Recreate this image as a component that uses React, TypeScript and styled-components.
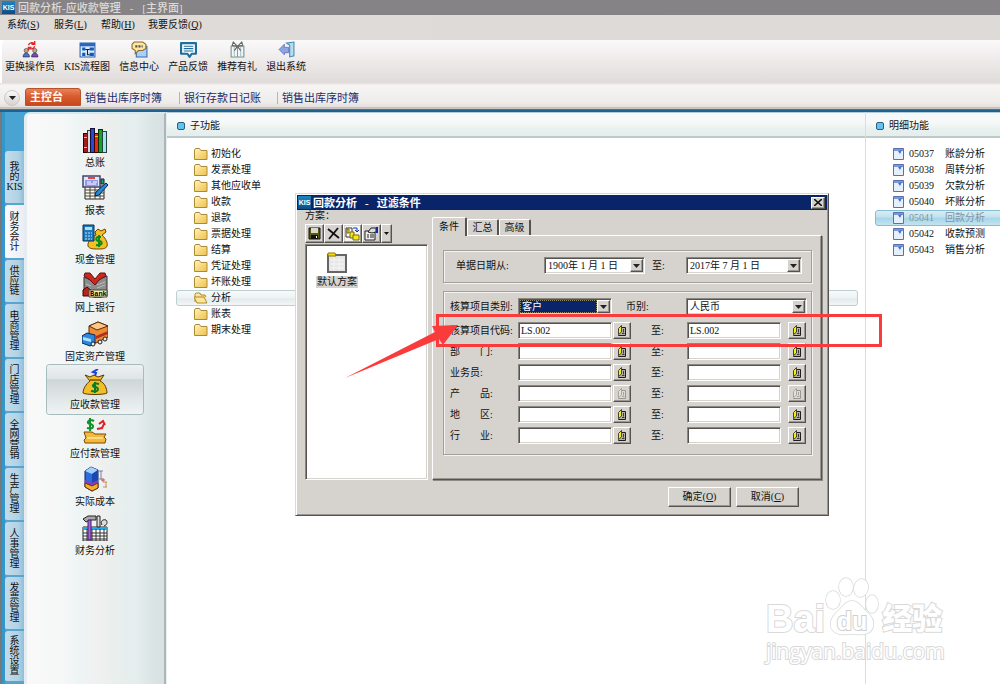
import React from "react";
import styled, { createGlobalStyle, css } from "styled-components";

const Global = createGlobalStyle`
  * { box-sizing: border-box; }
  html, body { margin: 0; padding: 0; }
  body {
    background: #fff;
    color: #111;
    font-family: "Liberation Serif", "Noto Sans CJK SC", sans-serif;
    font-size: 10px;
    line-height: 12px;
    overflow: hidden;
  }
  button, input, select { font: inherit; color: inherit; margin: 0; padding: 0; border-radius: 0; }
  ul { list-style: none; margin: 0; padding: 0; }
  a { color: inherit; text-decoration: none; }
`;

const Page = styled.div`
  position: relative;
  min-height: 100vh;
  display: flex;
  flex-direction: column;
  overflow: hidden;
`;

/* ---------- window chrome ---------- */

const WindowTitle = styled.header`
  display: flex;
  align-items: center;
  gap: 9px;
  height: 15px;
  padding-left: 2px;
  background: #858385;
  color: #dedad6;
  font-size: 11px;
  font-weight: 500;
`;

const KisMark = styled.span`
  display: flex;
  align-items: center;
  justify-content: center;
  width: 13px;
  height: 13px;
  margin-right: -6px;
  background: linear-gradient(#1f86c0, #0a4c86);
  color: #fff;
  font-family: "Liberation Sans", sans-serif;
  font-size: 7px;
  font-weight: 700;
  line-height: 8px;
`;

const MenuBar = styled.nav`
  display: flex;
  height: 25px;
  padding: 4px 0 0 7px;
  background: linear-gradient(90deg, #dfdbd7, #dedad8);
`;

const MenuItem = styled.button`
  min-width: 47px;
  height: 12px;
  border: 0;
  background: none;
  text-align: left;
  white-space: nowrap;
`;

const ToolBar = styled.div`
  display: flex;
  align-items: flex-start;
  gap: 9px;
  height: 43px;
  margin-left: 2px;
  padding: 1px 0 0 3px;
  border-top-left-radius: 4px;
  background: linear-gradient(#faf9fa, #f1eeee 35%, #dfdbd9);
`;

const Tool = styled.button`
  display: flex;
  flex-direction: column;
  align-items: center;
  gap: 3px;
  border: 0;
  background: none;
  white-space: nowrap;
`;

const TabStrip = styled.nav`
  display: flex;
  align-items: flex-end;
  height: 24px;
  padding: 0 0 1px 4px;
  background: linear-gradient(#e3dfdd, #f7f5f4 10%, #efecea 80%, #e4dfdc);
  color: #1c2c6c;
  font-size: 11px;
`;

const RoundButton = styled.button`
  display: flex;
  align-items: center;
  justify-content: center;
  width: 16px;
  height: 16px;
  margin-right: 5px;
  border: 1px solid #cdc9c7;
  border-radius: 8px;
  background: linear-gradient(#fafafa, #d6d2d0);
`;

const PageTab = styled.a<{ $on?: boolean }>`
  display: flex;
  align-items: center;
  height: 18px;
  width: 98px;
  padding-left: 4px;
  white-space: nowrap;
  & + & { border-left: 1px solid #b9b4b2; height: 12px; margin-bottom: 2px; }
  ${(p) =>
    p.$on &&
    css`
      width: 56px;
      border: 1px solid #b4532c;
      border-radius: 3px 3px 0 0;
      background: linear-gradient(#e88458, #d95c30 45%, #c9481f);
      color: #fff;
      font-weight: 700;
    `}
  &&:nth-of-type(2) { border-left: 0; }
`;

const Rule = styled.div`
  height: 5px;
  background: linear-gradient(#c9c2bf 0 2px, #6b6a70 2px 3px, #1f628c 3px 5px);
`;

/* ---------- body ---------- */

const Body = styled.div`
  flex: 1;
  display: flex;
  align-items: stretch;
  background: linear-gradient(90deg, #77787a 0 2px, #3397cb 2px 5px, #49a3d3 5px 30px, #fff 30px);
`;

const SideTabs = styled.nav`
  flex: none;
  width: 24px;
  padding: 39px 0 0 5px;
`;

const SideTab = styled.button<{ $on?: boolean; $short?: boolean }>`
  display: flex;
  align-items: center;
  justify-content: center;
  width: 19px;
  height: ${(p) => (p.$short ? 44 : 54)}px;
  border: 0;
  border-bottom: 2px solid #58a5cf;
  border-radius: 3px 0 0 3px;
  background: ${(p) =>
    p.$on ? "linear-gradient(90deg, #fbfcff, #ececf6)" : "linear-gradient(90deg, #c3dceb, #b2d2e4 70%, #8ebfd9)"};
  line-height: 10px;
  text-align: center;
  &:nth-child(even) { height: 55px; }
  &:last-child { height: 52px; }
`;

const SideLabel = styled.span`
  display: block;
  width: 16px;
  white-space: pre-line;
`;

const Modules = styled.nav`
  flex: none;
  width: 142px;
  padding: 9px 21px 0 20px;
  border-top: 2px solid #d5e9f0;
  border-left: 3px solid #e5edf0;
  border-right: 2px solid #aab6b8;
  border-top-left-radius: 6px;
  background: linear-gradient(90deg, #f9f9f9, #f6f7f7 26%, #edf5f4 38%, #f0f0f0 52%, #e8efed 66%, #e4eeed 80%, #dbe4e4 92%, #d8e0e1);
`;

const Module = styled.a<{ $on?: boolean }>`
  display: flex;
  flex-direction: column;
  align-items: center;
  gap: 4px;
  height: 48px;
  padding-top: 4px;
  white-space: nowrap;
  &:nth-child(even) { height: 49px; }
  ${(p) =>
    p.$on &&
    css`
      border-radius: 3px;
      background: linear-gradient(#eef1f1, #dfe4e5 28%, #cfd6d8 30%, #e2e7e8 70%, #eff3f3);
      box-shadow: 0 0 0 1px #a9bcbc;
    `}
`;

const Pane = styled.section<{ $side?: boolean }>`
  flex: ${(p) => (p.$side ? "0 0 135px" : "1 1 0")};
  min-width: 0;
  border-left: ${(p) => (p.$side ? "1px solid #dcdcdc" : "1px solid #e6eded")};
  background: #fff;
`;

const PaneHead = styled.h2`
  display: flex;
  align-items: center;
  gap: 5px;
  height: 26px;
  margin: 0;
  padding: 2px 0 0 10px;
  border-top: 1px solid #b4cbd8;
  border-bottom: 2px solid #bccaca;
  background: linear-gradient(#f4f8f9, #f7f9f9 40%, #e8f1ef 70%, #e5eeec);
  font-size: 10px;
  font-weight: 400;
`;

const PaneDot = styled.span`
  width: 8px;
  height: 8px;
  border: 1px solid #2a5f80;
  border-radius: 2px;
  background: #63c3f0;
`;

const List = styled.ul`
  padding: 8px 7px 0 9px;
`;

const ListRow = styled.li<{ $on?: boolean; $blue?: boolean }>`
  display: flex;
  height: 16px;
  border: 1px solid transparent;
  border-radius: 3px;
  ${(p) =>
    p.$on &&
    css`
      border-color: ${p.$blue ? "#86bdd3" : "#bccfd1"};
      background: ${p.$blue
        ? "linear-gradient(#d9edf5, #c0e1ef 45%, #a5d5e9 50%, #c3e4f0)"
        : "linear-gradient(#f8fafa, #eef2f2 50%, #e4ebeb 55%, #f1f5f5)"};
    `}
  ${(p) => p.$blue && css`margin-right: -10px;`}
`;

const RowLink = styled.a<{ $dim?: boolean }>`
  display: flex;
  align-items: center;
  gap: 3px;
  padding-left: 17px;
  white-space: nowrap;
  color: ${(p) => (p.$dim ? "#8595a0" : "#111")};
`;

const Code = styled.span`
  width: 33px;
  margin-left: 1px;
`;

/* ---------- dialog ---------- */

const face = "#d6d3ce";

const raised = css`
  border: 1px solid;
  border-color: #fff #55534f #55534f #fff;
  box-shadow: inset -1px -1px #9a9792;
`;

const sunken = css`
  border: 1px solid;
  border-color: #8a8783 #fff #fff #8a8783;
  box-shadow: inset 1px 1px #55534f, inset -1px -1px ${face};
`;

const Dialog = styled.div`
  position: absolute;
  left: 295px;
  top: 193px;
  width: 534px;
  padding: 1px;
  background: ${face};
  border: 1px solid;
  border-color: #dddad6 #55534f #55534f #dddad6;
  box-shadow: inset 1px 1px #fff, inset -1px -1px #9a9792;
`;

const DialogTitle = styled.header`
  display: flex;
  align-items: center;
  gap: 8px;
  height: 15px;
  padding: 0 2px 0 1px;
  background: #0a246a;
  color: #fff;
  font-size: 11px;
  font-weight: 700;
`;

const CloseButton = styled.button`
  ${raised}
  display: flex;
  align-items: center;
  justify-content: center;
  width: 14px;
  height: 12px;
  margin-left: auto;
  background: ${face};
`;

const DialogMain = styled.div`
  display: grid;
  grid-template-columns: 123px 1fr;
  column-gap: 4px;
  padding: 0 5px 0 8px;
`;

const Schemes = styled.section`
  display: flex;
  flex-direction: column;
`;

const SchemeTools = styled.div`
  display: flex;
  height: 19px;
  margin: 2px 0 1px;
`;

const SchemeTool = styled.button<{ $thin?: boolean }>`
  ${raised}
  display: flex;
  align-items: center;
  justify-content: center;
  width: ${(p) => (p.$thin ? 11 : 19)}px;
  height: 19px;
  background: ${face};
`;

const SchemeList = styled.div`
  ${sunken}
  flex: 1;
  padding: 7px 0 0 10px;
  background: #fff;
`;

const Scheme = styled.button`
  display: flex;
  flex-direction: column;
  align-items: center;
  gap: 3px;
  border: 0;
  background: none;
  span { padding: 0 1px; background: ${face}; }
`;

const Settings = styled.section`
  padding-top: 7px;
`;

const TabList = styled.div`
  display: flex;
  align-items: flex-end;
  height: 18px;
`;

const Tab = styled.button<{ $on?: boolean }>`
  height: ${(p) => (p.$on ? 19 : 16)}px;
  width: ${(p) => (p.$on ? 35 : 32)}px;
  margin-bottom: ${(p) => (p.$on ? -1 : 0)}px;
  border: 1px solid #fff;
  border-right: 2px solid #55534f;
  border-bottom: 0;
  border-radius: 2px 2px 0 0;
  background: ${face};
  position: relative;
`;

const TabPanel = styled.div`
  height: 245px;
  padding: 14px 9px 0 10px;
  border: 1px solid;
  border-color: #fff #55534f #55534f #fff;
  box-shadow: inset -1px -1px #9a9792, 1px 1px #8d8a86;
`;

const Group = styled.div<{ $tall?: boolean }>`
  height: ${(p) => (p.$tall ? 164 : 33)}px;
  margin-bottom: 8px;
  padding: ${(p) => (p.$tall ? "6px 4px 0 6px" : "6px 8px 0 12px")};
  border: 1px solid #a29f9b;
  box-shadow: inset 1px 1px #f4f3f1, 1px 1px #f4f3f1;
`;

const Line = styled.div`
  display: grid;
  align-items: center;
  height: 17px;
  white-space: nowrap;
`;

const DateLine = styled(Line)`
  grid-template-columns: 88px 101px 7px 34px 116px;
`;

const KindLine = styled(Line)`
  grid-template-columns: 68px 94px 14px 60px 121px;
  margin-bottom: 5px;
`;

const RangeLine = styled(Line)`
  grid-template-columns: 68px 94px 1px 19px 19px 36px 94px 7px 19px;
  height: 21px;
`;

const Field = styled.input`
  ${sunken}
  width: 100%;
  height: 17px;
  padding: 0 2px;
  background: #fff;
  outline: 0;
`;

const Combo = styled.span`
  ${sunken}
  display: flex;
  height: 17px;
  padding: 1px;
  background: #fff;
`;

const Choice = styled.select<{ $on?: boolean }>`
  appearance: none;
  flex: 1;
  min-width: 0;
  border: 0;
  padding: 0 2px;
  outline: ${(p) => (p.$on ? "1px dotted #8f8a6a" : "0")};
  outline-offset: -1px;
  background: ${(p) => (p.$on ? "#0a246a" : "#fff")};
  color: ${(p) => (p.$on ? "#fff" : "#111")};
`;

const Arrow = styled.span`
  ${raised}
  display: flex;
  align-items: center;
  justify-content: center;
  width: 13px;
  background: ${face};
`;

const PickButton = styled.button`
  ${raised}
  display: flex;
  align-items: center;
  justify-content: center;
  width: 18px;
  height: 17px;
  background: ${face};
`;

const DialogFooter = styled.footer`
  display: flex;
  justify-content: flex-end;
  gap: 5px;
  padding: 7px 28px 7px 0;
`;

const PushButton = styled.button`
  ${raised}
  width: 63px;
  height: 20px;
  background: ${face};
`;

const HighlightBox = styled.div`
  position: absolute;
  left: 140px;
  top: 120px;
  width: 446px;
  height: 33px;
  border: 3px solid #f93b3b;
`;

const HighlightArrow = styled.svg`
  position: absolute;
  left: 46px;
  top: 125px;
`;

/* ---------- watermark ---------- */

const Watermark = styled.div`
  position: absolute;
  right: 50px;
  bottom: 20px;
  width: 184px;
  color: #fff;
  -webkit-text-stroke: 2px #d9d9d9;
  paint-order: stroke fill;
  font-family: "Liberation Sans", "Noto Sans CJK SC", sans-serif;
  font-weight: 700;
`;

const Brand = styled.div`
  display: flex;
  align-items: flex-end;
  height: 62px;
  font-size: 38px;
  line-height: 38px;
  b { font-size: 30px; }
  svg { margin: 0 4px 2px 3px; }
`;

const Address = styled.div`
  font-family: "Open Sans", sans-serif;
  font-size: 21px;
  font-weight: 400;
  line-height: 26px;
`;

/* ---------- drawings ---------- */

const ic = { width: 26, height: 26, viewBox: "0 0 26 26", "aria-hidden": true } as const;

const moduleIcons: Record<string, React.ReactNode> = {
  总账: (
    <svg {...ic} shapeRendering="crispEdges">
      <path d="M1 6h4v19H1z" fill="#a01c20" stroke="#300" />
      <path d="M5 3h3v22H5z" fill="#d8d8d8" stroke="#333" />
      <path d="M8 1h4v24H8z" fill="#2448e0" stroke="#113" />
      <path d="M12 6h4v19h-4z" fill="#e82818" stroke="#400" />
      <path d="M16 2h4v23h-4z" fill="#18a028" stroke="#030" />
      <path d="M20 4h4v21h-4z" fill="#a8e4f0" stroke="#244" />
      <path d="M13 9h3M2 10h3M2 20h3" stroke="#fc0" />
    </svg>
  ),
  报表: (
    <svg {...ic}>
      <path d="M3 11h19v13H3z" fill="#fffbe8" stroke="#222" />
      <path d="M3 15h19M3 18h19M3 21h19M8 11v13M13 11v13M18 11v13" stroke="#444" />
      <path d="M1 1h17v11H1z" fill="#dfe4ff" stroke="#446" strokeWidth="1.500" />
      <path d="M6 3h7" stroke="#e04848" strokeWidth="2" />
      <path d="M3 5h13v6H3z" fill="#9098ea" />
      <path d="M5 7h4M11 7h4M5 9h9" stroke="#fff" />
      <path d="M19 4h3v5h-3z" fill="#2a9a70" stroke="#123" />
      <path d="M24 8l2 2-9 10-4 1 1-4z" fill="#1c8ce0" stroke="#124" />
    </svg>
  ),
  现金管理: (
    <svg {...ic}>
      <path d="M13 8l3-3 3 2 4-2 1 3-4 3c4 4 6 8 5 11-1 3-5 3-9 3s-9 0-10-3c-1-4 4-9 8-11z" fill="#f4c020" stroke="#6a4300" />
      <path d="M19 13c-6-1-6 4-2 4s4 5-3 4M17 11v12" stroke="#0a8a20" strokeWidth="2" fill="none" />
      <path d="M1 1h11v16H1z" fill="#1c78b8" stroke="#0a3050" />
      <path d="M3 3h7v3H3z" fill="#b0e0e8" />
      <path d="M3 9h7M3 12h7M3 15h7" stroke="#bde8ff" strokeDasharray="2 1" />
    </svg>
  ),
  网上银行: (
    <svg {...ic}>
      <path d="M2 5l9 4 14-5v20l-10 2-13-4z" fill="#8c8c8c" stroke="#333" />
      <path d="M4 12l5 2M4 15l5 2M15 13l8-3M15 16l8-3" stroke="#bbb" />
      <path d="M3 1h5l5 6 5-6h5l1 3-7 4-4 5-5-5-6-4z" fill="#cb2820" stroke="#601010" />
      <path d="M1 18l4-3 4 3v6H1z" fill="#b52520" stroke="#400" />
      <path d="M7 18h18v7H7z" fill="#f5eeaa" stroke="#444" />
      <text x="8" y="24" fontSize="7" fontWeight="700" fontFamily="Liberation Mono">Bank</text>
    </svg>
  ),
  固定资产管理: (
    <svg {...ic}>
      <path d="M7 5l9-4 10 4v11l-12 6-7-5z" fill="#ee8a38" stroke="#5c2c08" />
      <path d="M7 5l8 4 11-4-10-4z" fill="#fbc888" stroke="#5c2c08" />
      <path d="M14 15l12-5v3l-12 5z" fill="#b03018" />
      <path d="M0 15l5-3 8 2v9l-5 2-8-3z" fill="#2c88dc" stroke="#0a2858" />
      <path d="M1 16l8 2v3l-8-2z" fill="#aee0ff" />
      <circle cx="11" cy="23" r="2" fill="#eee" stroke="#222" />
      <circle cx="18" cy="21" r="2" fill="#eee" stroke="#222" />
      <circle cx="23" cy="18" r="2" fill="#eee" stroke="#222" />
    </svg>
  ),
  应收款管理: (
    <svg {...ic}>
      <path d="M3 6l5 2 4-2 4 2 6-2-4 6c5 2 7 8 7 12-3 2-21 2-24 0 0-4 3-9 7-12z" fill="#f2bd28" stroke="#5a3a00" />
      <path d="M8 11h10" stroke="#a06a00" strokeWidth="2" />
      <path d="M17 15c-6-2-8 3-4 3s5 6-4 4M13 13v11" stroke="#087c20" strokeWidth="2" fill="none" />
      <path d="M16 0l-5 3 3 1-1 3" stroke="#2040e0" strokeWidth="2" fill="none" />
    </svg>
  ),
  应付款管理: (
    <svg {...ic}>
      <path d="M2 14h8l3 2h11l-2 3 2 2-1 4H3l-1-3 2-2z" fill="#f4b83a" stroke="#7a4a08" />
      <path d="M5 20h16" stroke="#fbdc80" strokeWidth="2" />
      <path d="M12 3C6 0 4 6 8 6s5 6-3 4M8 0v13" stroke="#109028" strokeWidth="2" fill="none" />
      <path d="M15 11l5-1 2-4M17 6l4-3 2 4" stroke="#e02020" strokeWidth="2" fill="none" />
    </svg>
  ),
  实际成本: (
    <svg {...ic}>
      <path d="M3 5l6-4 7 3v18l-6 3-7-4z" fill="#2c6ce0" stroke="#0a2060" />
      <path d="M3 5l7 3 6-4-7-3z" fill="#a4d0ff" />
      <path d="M10 8l6-4v11l-6 3z" fill="#1848b0" />
      <path d="M3 14l7 3 6-3v3l-6 3-7-3z" fill="#9038c0" />
      <path d="M3 17l7 3 6-3v5l-6 3-7-4z" fill="#f4b028" stroke="#6a3a00" />
      <path d="M17 5h4M17 13h3M19 5v8" stroke="#7c7aa8" fill="none" />
      <path d="M19 14h4M21 12v4" stroke="#c05060" fill="none" />
      <path d="M21 16h4M21 21h4M24 16v5" stroke="#c09050" fill="none" />
    </svg>
  ),
  财务分析: (
    <svg {...ic}>
      <path d="M1 12h24v14H1z" fill="#fff" stroke="#222" />
      <path d="M1 12h24v3H1z" fill="#20a8e8" />
      <path d="M1 18h24M1 21h24M1 24h24M5 14v12M10 14v12M14 14v12M18 14v12M22 14v12" stroke="#333" />
      <path d="M1 4l5-3h8v4H9L4 7z" fill="#aaa" stroke="#222" />
      <path d="M6 5h3v20H6z" fill="#b060e0" stroke="#402060" />
      <path d="M15 1h3v11h-3zM20 10c-2-4 1-6 4-5 2 2 1 5-2 6" fill="#ddd" stroke="#222" />
    </svg>
  ),
};

const tc = { width: 17, height: 17, viewBox: "0 0 16 16", "aria-hidden": true } as const;

const User = ({ x, c }: { x: number; c: string }) => (
  <g>
    <circle cx={x + 3} cy="9" r="2" fill="#c9a48c" stroke="#444" strokeWidth="0.6" />
    <path d={`M${x} 15c0-5 6-5 6 0z`} fill={c} stroke="#223" strokeWidth="0.6" />
  </g>
);

const toolIcons = [
  <svg {...tc} key="u">
    <User x={1} c="#4b76c8" />
    <User x={9} c="#7a48b8" />
    <path d="M6 4c1-3 5-3 6-1M12 0v3H9M12 5c-1 3-5 3-6 1M6 9V6h3" stroke="#e42828" strokeWidth="1.3" fill="none" />
  </svg>,
  <svg {...tc} key="f">
    <path d="M1 2h14v13H1z" fill="#d8ecfb" stroke="#2a66b4" />
    <path d="M1 2h14v3H1z" fill="#2a66c0" />
    <path d="M3 6h3v3H3zM3 11h3v3H3zM10 6h4v3h-4zM10 11h4v3h-4z" fill="#1b58ac" />
    <path d="M6 8h2v5h2M8 8h2" stroke="#123" fill="none" />
  </svg>,
  <svg {...tc} key="m">
    <path d="M5 5h10v10H5z" fill="#a8d0f8" stroke="#3a68b0" />
    <path d="M3 1h8l3 2v4l-3 2H7l-3 3V9L1 7V3z" fill="#fce8a0" stroke="#8a6a30" />
    <path d="M4 5h7" stroke="#554" strokeWidth="2" strokeDasharray="2 1" />
  </svg>,
  <svg {...tc} key="c">
    <path d="M1 2h14v10h-4l-2 3-2-3H1z" fill="#fff" stroke="#1c6e9c" strokeWidth="2" strokeLinejoin="round" />
    <path d="M3.500 5h9M3.500 7.200h9M3.500 9.400h9" stroke="#1c6e9c" />
  </svg>,
  <svg {...tc} key="g">
    <path d="M2 5h12v10H2z" fill="#f3f7f7" stroke="#7c8c8c" />
    <path d="M5 5v10M11 5v10" stroke="#9fc4c4" />
    <path d="M8 5v10" stroke="#899" />
    <path d="M8 5L4 1 3 4zM8 5l4-4 1 3zM8 5L5 9M8 5l3 4" fill="#fff" stroke="#666" />
  </svg>,
  <svg {...tc} key="x">
    <path d="M8 2l7-1v13l-4 1V4z" fill="#b8dcf0" stroke="#4a88b0" />
    <path d="M1 8l5-5v3h4v5H6v2z" fill="#8fa4e0" stroke="#5c74b8" strokeWidth="0.8" />
  </svg>,
];

const Folder = ({ open }: { open?: boolean }) => (
  <svg width="14" height="12" viewBox="0 0 14 12" aria-hidden="true">
    <defs>
      <linearGradient id="fold" x1="0" y1="0" x2="1" y2="1">
        <stop offset="0" stopColor="#fff4b8" />
        <stop offset="1" stopColor="#ecc14e" />
      </linearGradient>
    </defs>
    <path d={open ? "M1 10V2l1-1h4l1 2h4l1 2" : "M.5 11.500V2l1-1.500h4L7 2.500h6v9z"} fill="url(#fold)" stroke="#b08a32" />
    {open && <path d="M0 5h10l3 6H3z" fill="#fbe69a" stroke="#b08a32" />}
  </svg>
);

const PageIcon = () => (
  <svg width="12" height="12" viewBox="0 0 12 12" aria-hidden="true">
    <path d="M.5.5h10v11H.5z" fill="#e6effc" stroke="#5a70a8" />
    <path d="M1 1h9v2H1z" fill="#7a9ae0" />
    <path d="M5 3l4-1-2 4z" fill="#4b6fce" />
  </svg>
);

const Down = () => (
  <svg width="7" height="4" viewBox="0 0 7 4" aria-hidden="true">
    <path d="M0 0h7L3.500 4z" fill="#222" />
  </svg>
);

const PickIcon = ({ off }: { off?: boolean }) => {
  const ink = off ? "#9a9792" : "#1c1c1c";
  return (
    <svg width="10" height="13" viewBox="0 0 10 13" aria-hidden="true">
      <path d="M5 3.500h3.500v8H1.500V11" fill={off ? "#dedbd6" : "#b4b2ac"} stroke={ink} />
      <path d="M1.500 4.500L4.500 1.500v6.500l-3 2.500z" fill={off ? "#e4e2de" : "#f8ec10"} stroke={ink} strokeWidth="0.8" />
      <path d="M6.500 5v3.500M5 9.500h2.500" stroke={ink} strokeWidth="0.8" />
    </svg>
  );
};

const Paw = () => (
  <svg width="50" height="58" viewBox="0 0 50 58" overflow="visible" aria-hidden="true">
    <g fill="#fff" stroke="#d9d9d9" strokeWidth="1.500">
      <ellipse cx="5" cy="22" rx="7" ry="9" />
      <ellipse cx="18" cy="9" rx="7" ry="9" />
      <ellipse cx="33" cy="10" rx="7" ry="9" transform="rotate(12 33 10)" />
      <ellipse cx="44" cy="26" rx="6" ry="9" />
      <path d="M24 23c7 0 10 7 16 12 8 7 7 19-3 21-5 1-9 0-13 0s-8 1-13 0c-11-3-10-14-3-21 6-5 9-12 16-12z" />
    </g>
    <text x="24" y="52" textAnchor="middle" fontSize="25" fontFamily="Liberation Sans" fontWeight="700" fill="#fff" stroke="#d0d0d0" strokeWidth="2">
      du
    </text>
  </svg>
);

/* ---------- data ---------- */

const menus = [["系统", "S"], ["服务", "L"], ["帮助", "H"], ["我要反馈", "Q"]];
const tools = ["更换操作员", "KIS流程图", "信息中心", "产品反馈", "推荐有礼", "退出系统"];
const sides = ["我\n的\nKIS", "财务会计", "供应链", "电商管理", "门店管理", "全网营销", "生产管理", "人事管理", "发票管理", "系统设置"];
const modules = ["总账", "报表", "现金管理", "网上银行", "固定资产管理", "应收款管理", "应付款管理", "实际成本", "财务分析"];
const functions = ["初始化", "发票处理", "其他应收单", "收款", "退款", "票据处理", "结算", "凭证处理", "坏账处理", "分析", "账表", "期末处理"];
const details = [
  ["05037", "账龄分析"],
  ["05038", "周转分析"],
  ["05039", "欠款分析"],
  ["05040", "坏账分析"],
  ["05041", "回款分析"],
  ["05042", "收款预测"],
  ["05043", "销售分析"],
];
const ranges = [
  { label: "核算项目代码:", value: "LS.002" },
  { label: "部\u3000\u3000门:" },
  { label: "业务员:" },
  { label: "产\u3000\u3000品:", off: true },
  { label: "地\u3000\u3000区:" },
  { label: "行\u3000\u3000业:" },
];

function Select({ id, value, on }: { id: string; value: string; on?: boolean }) {
  return (
    <Combo>
      <Choice id={id} $on={on} defaultValue={value}>
        <option>{value}</option>
      </Choice>
      <Arrow><Down /></Arrow>
    </Combo>
  );
}

function FilterDialog() {
  return (
    <Dialog role="dialog" aria-label="过滤条件">
      <DialogTitle>
        <KisMark>KIS</KisMark>
        <span>回款分析</span><span>-</span><span>过滤条件</span>
        <CloseButton aria-label="关闭">
          <svg width="8" height="7" viewBox="0 0 8 7"><path d="M0 0l8 7M8 0L0 7" stroke="#111" strokeWidth="1.600" /></svg>
        </CloseButton>
      </DialogTitle>
      <DialogMain>
        <Schemes>
          <span>方案：</span>
          <SchemeTools>
            <SchemeTool aria-label="保存">
              <svg width="13" height="13" viewBox="0 0 13 13"><path d="M1 1h11v11H1z" fill="#5a5a10" stroke="#111" /><path d="M3 1h7v5H3z" fill="#d8d8d0" /><path d="M3 8h7v4H3z" fill="#111" /><path d="M8 9h1v2H8z" fill="#fff" /></svg>
            </SchemeTool>
            <SchemeTool aria-label="删除">
              <svg width="13" height="13" viewBox="0 0 13 13"><path d="M1 2l11 9M11 1L2 12" stroke="#111" strokeWidth="1.800" /></svg>
            </SchemeTool>
            <SchemeTool aria-label="另存">
              <svg width="15" height="15" viewBox="0 0 15 15"><path d="M0 0h15v15H0z" fill="#f4f4f0" /><path d="M1 2h6v9H1z" fill="#fff" stroke="#333" /><path d="M2 3h2v4H2zM5 6h4v6H5z" fill="#f6e820" stroke="#776a10" /><path d="M8 9h6v5H8z" fill="#f6e820" stroke="#776a10" /><path d="M8 2h4v4M10 4l2 2 2-2" stroke="#1c30c0" fill="none" /></svg>
            </SchemeTool>
            <SchemeTool aria-label="属性">
              <svg width="15" height="15" viewBox="0 0 15 15"><path d="M1 5h10v9H1z" fill="#eee" stroke="#222" /><path d="M3 9h2M6 9h4M3 11h2M6 11h4" stroke="#222" /><path d="M4 6l3-4h5v4l-4 1z" fill="#ddd" stroke="#222" /><path d="M12 1h2v6h-2z" fill="#182898" /></svg>
            </SchemeTool>
            <SchemeTool $thin aria-label="更多">
              <svg width="5" height="3" viewBox="0 0 5 3"><path d="M0 0h5L2.500 3z" fill="#111" /></svg>
            </SchemeTool>
          </SchemeTools>
          <SchemeList>
            <Scheme>
              <svg width="20" height="21" viewBox="0 0 20 21" aria-hidden="true"><path d="M1 3h18v17H1z" fill="#e6e6e6" stroke="#666" strokeWidth="2" /><path d="M3 8h14M3 12h14M3 16h14M7 5v14M12 5v14" stroke="#f6f6f6" /><path d="M1 1h7l1 3H1z" fill="#fcdc10" stroke="#8a7400" /></svg>
              <span>默认方案</span>
            </Scheme>
          </SchemeList>
        </Schemes>
        <Settings>
          <TabList role="tablist">
            <Tab role="tab" aria-selected $on>条件</Tab>
            <Tab role="tab">汇总</Tab>
            <Tab role="tab">高级</Tab>
          </TabList>
          <TabPanel role="tabpanel">
            <Group>
              <DateLine>
                <label htmlFor="from">单据日期从:</label>
                <Select id="from" value="1900年 1 月 1 日" />
                <span />
                <label htmlFor="to">至:</label>
                <Select id="to" value="2017年 7 月 1 日" />
              </DateLine>
            </Group>
            <Group $tall>
              <KindLine>
                <label htmlFor="kind">核算项目类别:</label>
                <Select id="kind" value="客户" on />
                <span />
                <label htmlFor="money">币别:</label>
                <Select id="money" value="人民币" />
              </KindLine>
              {ranges.map((r, i) => (
                <RangeLine key={r.label}>
                  <label htmlFor={`a${i}`}>{r.label}</label>
                  <Field id={`a${i}`} defaultValue={r.value} />
                  <span />
                  <PickButton disabled={r.off} aria-label="选择"><PickIcon off={r.off} /></PickButton>
                  <span />
                  <label htmlFor={`b${i}`}>至:</label>
                  <Field id={`b${i}`} defaultValue={r.value} />
                  <span />
                  <PickButton disabled={r.off} aria-label="选择"><PickIcon off={r.off} /></PickButton>
                </RangeLine>
              ))}
            </Group>
          </TabPanel>
        </Settings>
      </DialogMain>
      <DialogFooter>
        <PushButton>确定(<u>O</u>)</PushButton>
        <PushButton>取消(<u>C</u>)</PushButton>
      </DialogFooter>
      <HighlightBox />
      <HighlightArrow width="116" height="60" viewBox="0 0 116 60" aria-hidden="true">
        <path d="M3 59L97 20l4 6 15-20-26 1 3 6z" fill="#f93b3b" />
      </HighlightArrow>
    </Dialog>
  );
}

export default function App() {
  return (
    <Page>
      <Global />
      <WindowTitle>
        <KisMark>KIS</KisMark>
        <span>回款分析-应收款管理</span><span>-</span><span>[主界面]</span>
      </WindowTitle>
      <MenuBar>
        {menus.map(([name, key]) => (
          <MenuItem key={key}>{name}(<u>{key}</u>)</MenuItem>
        ))}
      </MenuBar>
      <ToolBar>
        {tools.map((t, i) => (
          <Tool key={t}>{toolIcons[i]}<span>{t}</span></Tool>
        ))}
      </ToolBar>
      <TabStrip>
        <RoundButton aria-label="展开"><Down /></RoundButton>
        <PageTab href="#" $on>主控台</PageTab>
        <PageTab href="#">销售出库序时簿</PageTab>
        <PageTab href="#">银行存款日记账</PageTab>
        <PageTab href="#">销售出库序时簿</PageTab>
      </TabStrip>
      <Rule />
      <Body>
        <SideTabs>
          {sides.map((s, i) => (
            <SideTab key={s} $on={i === 1} $short={i === 2}>
              <SideLabel>{s.includes("\n") ? s : s.split("").join("\n")}</SideLabel>
            </SideTab>
          ))}
        </SideTabs>
        <Modules>
          {modules.map((m) => (
            <Module href="#" key={m} $on={m === "应收款管理"}>{moduleIcons[m]}<span>{m}</span></Module>
          ))}
        </Modules>
        <Pane>
          <PaneHead><PaneDot />子功能</PaneHead>
          <List>
            {functions.map((f) => (
              <ListRow key={f} $on={f === "分析"}>
                <RowLink href="#"><Folder open={f === "分析"} />{f}</RowLink>
              </ListRow>
            ))}
          </List>
        </Pane>
        <Pane $side>
          <PaneHead><PaneDot />明细功能</PaneHead>
          <List>
            {details.map(([code, name]) => (
              <ListRow key={code} $on={code === "05041"} $blue={code === "05041"}>
                <RowLink href="#" $dim={code === "05041"}><PageIcon /><Code>{code}</Code>{name}</RowLink>
              </ListRow>
            ))}
          </List>
        </Pane>
      </Body>
      <Watermark>
        <Brand><span>Bai</span><Paw /><b>经验</b></Brand>
        <Address>jingyan.baidu.com</Address>
      </Watermark>
      <FilterDialog />
    </Page>
  );
}
